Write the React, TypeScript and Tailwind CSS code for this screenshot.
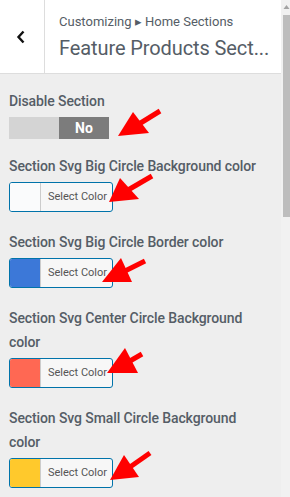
import React from "react";

const font = { fontFamily: "Roboto, 'Noto Sans', sans-serif" };

function ColorButton({ color }: { color: string }) {
  return (
    <div className="mt-[4px] flex h-[30px] w-[104px] overflow-hidden rounded-[3px] border border-[#0073aa] bg-[#f7f7f7]">
      <div className="h-full w-[31px] border-r border-[#cccccc]" style={{ backgroundColor: color }} />
      <div className="flex flex-1 items-center justify-center pl-[2px] text-[11px] text-[#555555]">Select Color</div>
    </div>
  );
}

function Label({ children, className = "" }: { children: React.ReactNode; className?: string }) {
  return (
    <div className={`text-[14px] font-medium leading-[24px] tracking-[-0.1px] text-[#555d66] ${className}`}>{children}</div>
  );
}

export default function App() {
  return (
    <div className="relative flex h-[497px] w-[290px] overflow-hidden bg-[#eeeeee]" style={font}>
      <div className="flex w-[281px] flex-col">
        <div className="flex h-[74px] border-b border-[#dddddd] bg-white">
          <div className="flex w-[45px] items-center justify-center border-r border-[#dddddd]">
            <svg width="10" height="14" viewBox="0 0 10 14" className="mr-[3px] mt-[0px]">
              <path d="M7.5 1.5 L2.5 7 L7.5 12.5" fill="none" stroke="#111" strokeWidth="2.4" />
            </svg>
          </div>
          <div className="flex flex-col pl-[14px] pt-[12px]">
            <div className="text-[13px] leading-[20px] text-[#555d66]">Customizing ▸ Home Sections</div>
            <div className="mt-[3px] whitespace-nowrap text-[20px] leading-[26px] tracking-[-0.1px] text-[#555d66]">Feature Products Sect...</div>
          </div>
        </div>
        <div className="flex flex-col pl-[9px]">
          <Label className="mt-[15px]">Disable Section</Label>
          <div className="mt-[4px] flex h-[22px] w-[100px]">
            <div className="w-[50px] bg-[#d4d4d4]" />
            <div className="flex w-[50px] items-center justify-center bg-[#7c7c7c] text-[14px] font-bold text-white">No</div>
          </div>
          <Label className="mt-[15px]">Section Svg Big Circle Background color</Label>
          <ColorButton color="#fafbfc" />
          <Label className="mt-[18px]">Section Svg Big Circle Border color</Label>
          <ColorButton color="#3c78d8" />
          <Label className="mt-[18px]">Section Svg Center Circle Background<br />color</Label>
          <ColorButton color="#ff6853" />
          <Label className="mt-[18px]">Section Svg Small Circle Background<br />color</Label>
          <ColorButton color="#ffc92c" />
        </div>
      </div>
      <div className="relative w-[9px] bg-[#f1f1f1]">
        <svg width="7" height="6" viewBox="0 0 7 6" className="absolute left-[2px] top-[4px]">
          <path d="M0.5 5 L3.5 1 L6.5 5 Z" fill="#a3a3a3" />
        </svg>
        <div className="absolute left-[2px] top-[15px] h-[202px] w-[7px] bg-[#bdbdbd]" />
      </div>
      <svg className="pointer-events-none absolute left-0 top-0" width="290" height="497" viewBox="0 0 290 497">
        <g fill="#ff0000" stroke="#ff0000" strokeLinecap="butt">
          <line x1="139" y1="124" x2="160" y2="111" strokeWidth="5" />
          <polygon points="118,136 133,112 149,133" strokeWidth="0" />
          <line x1="128" y1="190" x2="152" y2="176" strokeWidth="5" />
          <polygon points="109,202 120,178 139,199" strokeWidth="0" />
          <line x1="125" y1="271" x2="145" y2="261" strokeWidth="5" />
          <polygon points="102,282 121,258 132,282" strokeWidth="0" />
          <line x1="130" y1="361" x2="142" y2="354" strokeWidth="5" />
          <polygon points="107,373 125,348 138,373" strokeWidth="0" />
          <line x1="130" y1="467" x2="150" y2="453" strokeWidth="5" />
          <polygon points="110,480 124,455 139,477" strokeWidth="0" />
        </g>
      </svg>
    </div>
  );
}
